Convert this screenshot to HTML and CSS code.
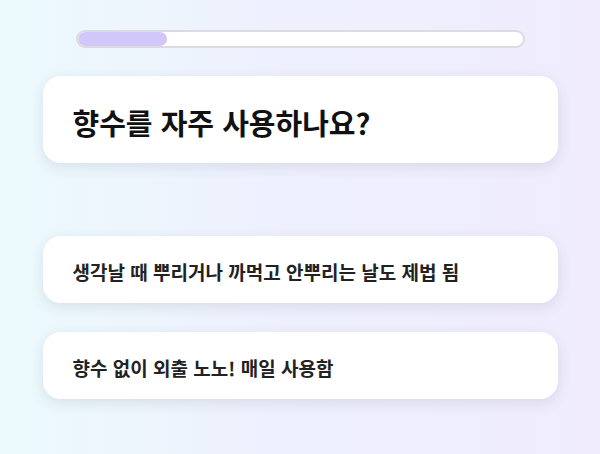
FILE: index.html
```html
<!DOCTYPE html>
<html lang="ko">

<head>
    <meta charset="UTF-8">
    <meta name="viewport" content="width=device-width, initial-scale=1.0">
    <title>향수 테스트</title>
    <link rel="stylesheet" href="styles.css">
</head>

<body>
    <div class="quiz">
        <div class="progress">
            <div class="progress-fill" style="width: 20%;"></div>
        </div>
        <div class="question">
            <h1>향수를 자주 사용하나요?</h1>
        </div>
        <div class="answers">
            <button class="answer">생각날 때 뿌리거나 까먹고 안뿌리는 날도 제법 됨</button>
            <button class="answer">향수 없이 외출 노노! 매일 사용함</button>
        </div>
    </div>
</body>

</html>
```

FILE: styles.css
```css
* {
    box-sizing: border-box;
}

html,
body {
    margin: 0;
    height: 100%;
}

body {
    background: linear-gradient(to right, #ecfafd 0%, #eef0fd 50%, #f0ecfd 100%);
    font-family: "Noto Sans CJK KR", "Noto Sans", sans-serif;
    color: #111;
}

.quiz {
    width: 515px;
    margin: 0 auto;
    padding-top: 30px;
}

.progress {
    width: 449px;
    height: 18px;
    margin: 0 auto;
    background: #fff;
    border: 2px solid #dcdbe2;
    border-radius: 9px;
    overflow: hidden;
}

.progress-fill {
    height: 100%;
    background: #d3c6fb;
    border-radius: 7px;
}

.question {
    display: flex;
    align-items: center;
    height: 87px;
    margin-top: 28px;
    padding: 4px 30px 0;
    background: #fff;
    border-radius: 18px;
    box-shadow: 0 4px 14px rgba(60, 60, 90, 0.12);
}

.question h1 {
    margin: 0;
    font-size: 29px;
    font-weight: 700;
}

.answers {
    display: flex;
    flex-direction: column;
    gap: 29px;
    margin-top: 73px;
}

.answer {
    display: flex;
    align-items: center;
    height: 67px;
    padding: 3px 30px 0;
    background: #fff;
    border: none;
    border-radius: 18px;
    box-shadow: 0 4px 14px rgba(60, 60, 90, 0.12);
    font-family: inherit;
    font-size: 19px;
    font-weight: 700;
    color: #222;
    text-align: left;
}
```
